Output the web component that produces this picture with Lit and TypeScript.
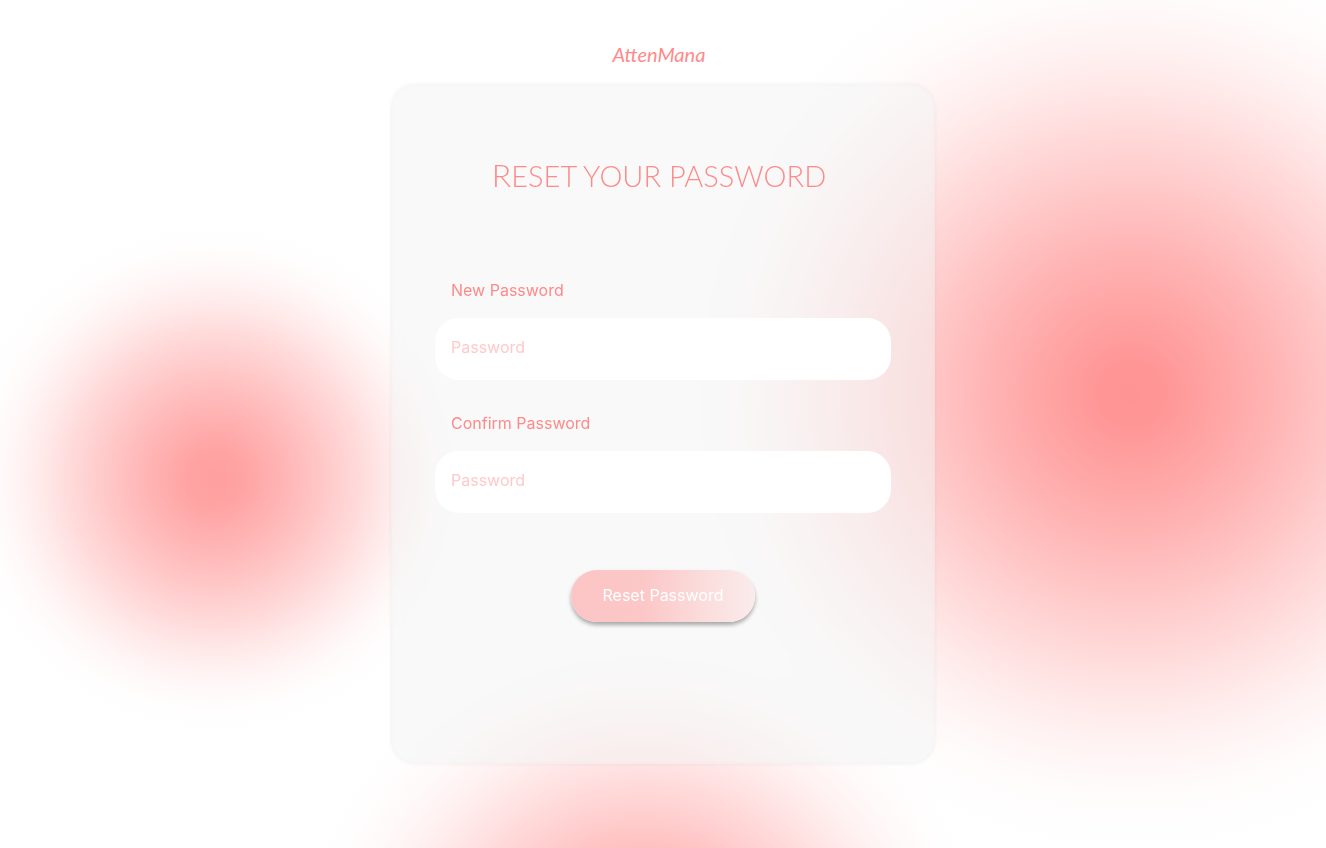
import { LitElement, html, css } from "lit";
import { customElement } from "lit/decorators.js";

@customElement("password-field")
class PasswordField extends LitElement {
  static properties = { label: { type: String }, name: { type: String } };
  declare label: string;
  declare name: string;

  static styles = css`
    :host {
      display: block;
    }
    .label {
      display: block;
      padding-left: 16px;
      margin-bottom: 16px;
      font-size: 16px;
      line-height: 24px;
      color: #ff8a8a;
    }
    .input {
      display: block;
      box-sizing: border-box;
      width: 100%;
      height: 62px;
      padding: 0 16px 4px;
      border: 0;
      border-radius: 24px;
      background: #fff;
      font: inherit;
      font-size: 16px;
      color: #ff8a8a;
      outline-color: #ffb5b5;
    }
    .input::placeholder {
      color: #ffcaca;
      opacity: 1;
    }
  `;

  render() {
    return html`
      <label class="label" for="field">${this.label}</label>
      <input class="input" id="field" type="password" name=${this.name} placeholder="Password" />
    `;
  }
}

@customElement("app-root")
class AppRoot extends LitElement {
  static styles = css`
    :host {
      display: block;
      font-family: Inter, "Liberation Sans", sans-serif;
    }
    .page {
      box-sizing: border-box;
      display: flex;
      flex-direction: column;
      align-items: center;
      gap: 16px;
      min-height: 100vh;
      padding: 40px 16px 84px;
      background:
        radial-gradient(
          circle 470px at 85.3% 46.4%,
          rgba(255, 146, 146, 0.99) 0%,
          rgba(255, 146, 146, 0.96) 7%,
          rgba(255, 146, 146, 0.87) 15%,
          rgba(255, 146, 146, 0.8) 21%,
          rgba(255, 146, 146, 0.69) 30%,
          rgba(255, 146, 146, 0.54) 41%,
          rgba(255, 146, 146, 0.43) 49%,
          rgba(255, 146, 146, 0.26) 62%,
          rgba(255, 146, 146, 0.13) 73%,
          rgba(255, 146, 146, 0.04) 84%,
          rgba(255, 146, 146, 0.01) 92%,
          rgba(255, 146, 146, 0) 100%
        ),
        radial-gradient(
          circle 260px at 16.2% 56.4%,
          rgba(255, 146, 146, 0.88) 0%,
          rgba(255, 146, 146, 0.85) 10%,
          rgba(255, 146, 146, 0.77) 18%,
          rgba(255, 146, 146, 0.63) 31%,
          rgba(255, 146, 146, 0.49) 43%,
          rgba(255, 146, 146, 0.32) 57%,
          rgba(255, 146, 146, 0.22) 65%,
          rgba(255, 146, 146, 0.12) 74%,
          rgba(255, 146, 146, 0.05) 82%,
          rgba(255, 146, 146, 0.01) 91%,
          rgba(255, 146, 146, 0) 100%
        ),
        radial-gradient(
          circle 360px at 48.4% 116.5%,
          rgba(255, 146, 146, 1) 0%,
          rgba(255, 146, 146, 0.81) 21%,
          rgba(255, 146, 146, 0.56) 40%,
          rgba(255, 146, 146, 0.43) 49%,
          rgba(255, 146, 146, 0.26) 62%,
          rgba(255, 146, 146, 0.13) 73%,
          rgba(255, 146, 146, 0.05) 83%,
          rgba(255, 146, 146, 0.01) 92%,
          rgba(255, 146, 146, 0) 100%
        ),
        #fff;
    }
    .logo {
      padding-right: 8px;
      font-family: Lato, "Liberation Sans", cursive;
      font-style: italic;
      font-weight: 400;
      font-size: 20px;
      line-height: 28px;
      color: #ff8a8a;
      text-decoration: none;
    }
    .card {
      box-sizing: border-box;
      display: flex;
      flex-direction: column;
      flex-grow: 1;
      width: 100%;
      max-width: 544px;
      padding: 69px 44px 48px;
      border-radius: 24px;
      background: rgba(243, 243, 243, 0.52);
      backdrop-filter: blur(8px);
      box-shadow:
        0 0 4px rgba(0, 0, 0, 0.05),
        inset 0 0 4px rgba(0, 0, 0, 0.03);
    }
    .title {
      margin: 0 0 80px;
      padding-right: 8px;
      font-family: Lato, "Liberation Sans", sans-serif;
      font-weight: 300;
      font-size: 29px;
      line-height: 44px;
      text-align: center;
      text-transform: uppercase;
      color: #ff8a8a;
    }
    .title::first-letter {
      font-size: 32px;
    }
    .form {
      display: flex;
      flex-direction: column;
      gap: 31px;
    }
    .submit {
      align-self: center;
      height: 52px;
      margin-top: 26px;
      padding: 0 32px 2px;
      border: 0;
      border-radius: 26px;
      background: linear-gradient(90deg, #fcc5c5 0%, #fcc7c7 40%, #fbdede 75%, #fbebeb 100%);
      box-shadow: 0 3px 4px rgba(0, 0, 0, 0.33);
      font: inherit;
      font-size: 16px;
      color: #fff;
      cursor: pointer;
    }
  `;

  render() {
    return html`
      <main class="page">
        <a class="logo" href="#">AttenMana</a>
        <section class="card">
          <h1 class="title">Reset your password</h1>
          <form class="form" @submit=${(e: Event) => e.preventDefault()}>
            <password-field label="New Password" name="new-password"></password-field>
            <password-field label="Confirm Password" name="confirm-password"></password-field>
            <button class="submit" type="submit">Reset Password</button>
          </form>
        </section>
      </main>
    `;
  }
}
